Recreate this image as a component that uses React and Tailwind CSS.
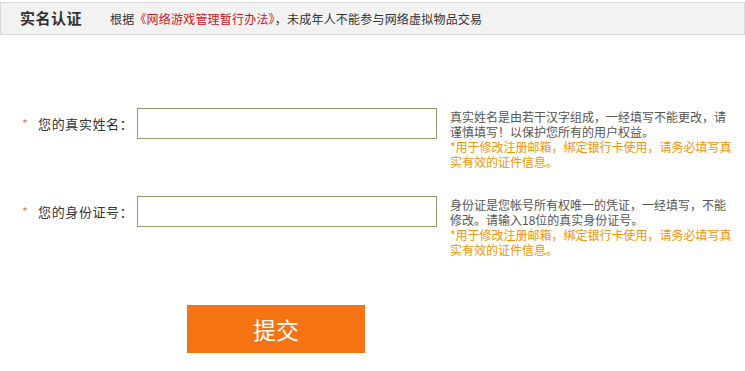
import React from "react";

const hintOrange = "*用于修改注册邮箱，绑定银行卡使用，请务必填写真实有效的证件信息。";

const fields = [
  {
    label: "您的真实姓名：",
    hint: "真实姓名是由若干汉字组成，一经填写不能更改，请谨慎填写！以保护您所有的用户权益。",
  },
  {
    label: "您的身份证号：",
    hint: "身份证是您帐号所有权唯一的凭证，一经填写，不能修改。请输入18位的真实身份证号。",
  },
];

const App = () => {
  return (
    <div className="w-[745px] h-[371px] bg-white font-['Noto_Sans_CJK_SC','Liberation_Sans',sans-serif] text-[#333]">
      {/* Header */}
      <div className="mt-[2px] h-[33px] border border-[#dadada] bg-[#f2f2f2] flex items-center">
        <span className="ml-[19px] text-[15px] font-bold tracking-[0.5px] text-[#333]">实名认证</span>
        <span className="ml-[28px] text-[12px] tracking-[0.2px] text-[#333]">
          根据<span className="text-[#c8161d]">《网络游戏管理暂行办法》</span>，未成年人不能参与网络虚拟物品交易
        </span>
      </div>

      {/* Form */}
      <div className="pt-[73px]">
        {fields.map((f, i) => (
          <div key={f.label} className={`flex items-start ${i > 0 ? "mt-[27px]" : ""}`}>
            <div className="w-[137px] h-[31px] flex items-center">
              <span className="ml-[22px] text-[13px] text-[#f08a5d]">*</span>
              <span className="ml-[10px] text-[13px] tracking-[0.6px] text-[#333]">{f.label}</span>
            </div>
            <input
              type="text"
              className="w-[300px] h-[31px] border border-[#8a9e6c] outline-none px-2 text-[13px]"
            />
            <div className="ml-[13px] w-[288px] pt-[1px] text-[12px] leading-[15px]">
              <p className="w-[280px] text-[#555]">{f.hint}</p>
              <p className="text-[#f29400]">{hintOrange}</p>
            </div>
          </div>
        ))}

        <button
          type="button"
          className="mt-[48px] ml-[187px] w-[178px] h-[48px] bg-[#f57313] text-white text-[23px] flex items-center justify-center"
        >
          提交
        </button>
      </div>
    </div>
  );
};

export default App;
